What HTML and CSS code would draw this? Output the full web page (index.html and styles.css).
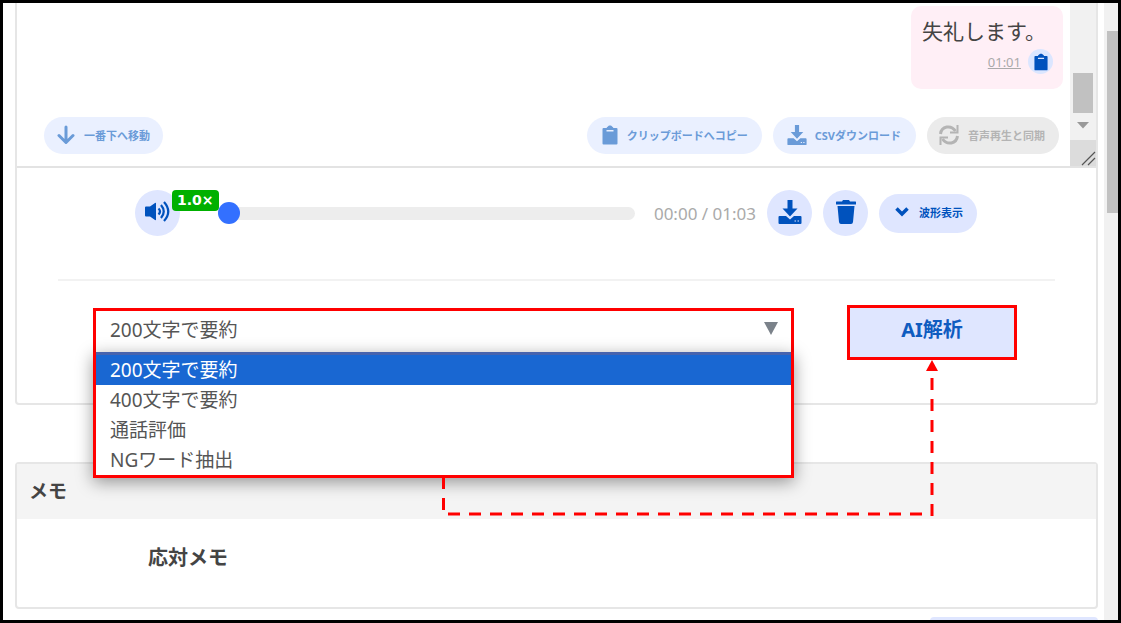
FILE: index.html
```
<!DOCTYPE html>
<html lang="ja">
<head>
  <meta charset="UTF-8">
  <meta name="viewport" content="width=device-width, initial-scale=1.0">
  <title>通話詳細</title>
  <link rel="stylesheet" href="styles.css">
</head>
<body>
  <!-- 共通アイコン -->
  <svg class="sprite" aria-hidden="true">
    <symbol id="i-clipboard" viewBox="0 0 16 20">
      <path d="M1.5 3H4.6C4.8 2 5.6 2 6 1.5C6.400 .3 9.600 .3 10 1.500C10.400 2 11.200 2 11.400 3H14.500Q15.500 3 15.500 4V18.500Q15.500 19.500 14.500 19.500H1.500Q.5 19.500 .5 18.500V4Q.5 3 1.500 3ZM4.500 5V6.500H11.500V5Z" fill="currentColor" fill-rule="evenodd"/>
    </symbol>
    <symbol id="i-download" viewBox="0 0 24 24">
      <path d="M9.500 0h5v8.500h5L12 16.500 4.500 8.500h5zM1.500 16H8l4 3.500 4-3.500h6.500q1 0 1 1v6q0 1-1 1h-21q-1 0-1-1v-6q0-1 1-1zM16.500 20.500v1H18v-1zM19.500 20.500v1H21v-1z" fill="currentColor" fill-rule="evenodd"/>
    </symbol>
  </svg>

  <div class="window">
    <main class="page">
      <section class="card call">
        <div class="transcript">
          <div class="transcript-body">
            <div class="bubble">
              <p class="bubble-text">失礼します。</p>
              <div class="bubble-foot">
                <a class="bubble-time" href="#">01:01</a>
                <button type="button" class="bubble-copy" aria-label="コピー"><svg width="14" height="18"><use href="#i-clipboard"/></svg></button>
              </div>
            </div>
            <div class="toolbar">
              <button type="button" class="pill light to-bottom">
                <svg width="18" height="20" viewBox="0 0 18 20" fill="none" stroke="currentColor" stroke-width="3" stroke-linecap="round" stroke-linejoin="round"><path d="M9 2V17M2 10.500L9 17.500L16 10.500"/></svg>
                一番下へ移動
              </button>
              <button type="button" class="pill light clip">
                <svg width="16" height="20"><use href="#i-clipboard"/></svg>
                クリップボードへコピー
              </button>
              <button type="button" class="pill light csv">
                <svg width="20" height="20"><use href="#i-download"/></svg>
                CSVダウンロード
              </button>
              <button type="button" class="pill gray" disabled>
                <svg width="20" height="20" viewBox="0 0 20 20" fill="none" stroke="currentColor" stroke-width="3"><path d="M1.500 9C2.500 1 12 -.5 16.500 6M18.500 11C17.500 19 8 20.500 3.500 14"/><path d="M18.500 0V7.500H11M1.500 20V12.500H9" stroke-width="2"/></svg>
                音声再生と同期
              </button>
            </div>
          </div>
          <div class="inner-scroll">
            <div class="inner-track">
              <div class="inner-thumb"></div>
              <svg width="12" height="7" viewBox="0 0 12 7"><path d="M0 0H12L6 6.500Z" fill="#999"/></svg>
            </div>
            <svg class="resizer" width="26" height="26" viewBox="0 0 26 26" fill="none" stroke="#555" stroke-width="1.200"><path d="M12 25L25 12M18 25L25 18"/></svg>
          </div>
        </div>

        <div class="player">
          <button type="button" class="round volume" aria-label="再生速度">
            <svg width="27" height="22" viewBox="0 0 27 22"><path d="M1 6.500Q1 5.500 2 5.500H6L11 2Q12 1.500 12 2.500V18.500Q12 19.500 11 19L6 15.500H2Q1 15.500 1 14.500Z" fill="currentColor"/><path d="M14.500 7.500Q17.500 10.500 14.500 13.500M17 4Q22.500 10.500 17 17M20 1Q28.500 10.500 20 20" fill="none" stroke="currentColor" stroke-width="2.200"/></svg>
            <span class="speed">1.0×</span>
          </button>
          <input type="range" class="seek" min="0" max="63" value="0" aria-label="再生位置">
          <span class="time">00:00 / 01:03</span>
          <button type="button" class="round" aria-label="ダウンロード"><svg width="24" height="24"><use href="#i-download"/></svg></button>
          <button type="button" class="round" aria-label="削除">
            <svg width="20" height="24" viewBox="0 0 20 24" fill="currentColor"><path d="M0 2Q0 1.500 .5 1.500H6L7 0H13L14 1.500H19.500Q20 1.500 20 2V4.500H0ZM1.500 6H18.500L17 22Q16.800 24 15 24H5Q3.200 24 3 22Z"/></svg>
          </button>
          <button type="button" class="pill wave">
            <svg width="14" height="10" viewBox="0 0 14 10" fill="none" stroke="currentColor" stroke-width="3.500"><path d="M1.500 1.500L7 7L12.500 1.500"/></svg>
            波形表示
          </button>
        </div>

        <hr class="divider">

        <div class="analysis">
          <div class="picker">
            <select class="picker-select" aria-label="解析内容">
              <option>200文字で要約</option>
              <option>400文字で要約</option>
              <option>通話評価</option>
              <option>NGワード抽出</option>
            </select>
            <svg class="caret" width="14" height="13" viewBox="0 0 14 13"><path d="M0 0H14L7 13Z" fill="#7b828a"/></svg>
            <ul class="menu" role="listbox" aria-label="解析内容">
              <li class="selected" role="option" aria-selected="true">200文字で要約</li>
              <li role="option">400文字で要約</li>
              <li role="option">通話評価</li>
              <li role="option">NGワード抽出</li>
            </ul>
          </div>
          <div class="run">
            <button type="button" class="run-btn">AI解析</button>
            <!-- 選択欄から解析ボタンへの矢印 -->
            <svg class="connector" width="496" height="157" viewBox="0 0 496 157" fill="none" stroke="#f00" stroke-width="3">
              <path d="M1.500 118V154" stroke-dasharray="11 9 12 20"/>
              <path d="M6 154H480" stroke-dasharray="12 9"/>
              <path d="M490 156V12" stroke-dasharray="12 9"/>
              <path d="M490 0L496 11H484Z" fill="#f00" stroke="none"/>
            </svg>
          </div>
        </div>
      </section>

      <section class="card memo">
        <h2 class="memo-title">メモ</h2>
        <h3 class="memo-label">応対メモ</h3>
      </section>

      <button type="button" class="save-btn" aria-label="保存"></button>
    </main>
    <div class="page-scroll"><div class="page-thumb"></div></div>
  </div>
</body>
</html>
```

FILE: styles.css
```
* {
  box-sizing: border-box;
}
body {
  margin: 0;
  color: #444;
  background: #fff;
  font-family: "Noto Sans", "Noto Sans CJK JP", sans-serif;
}
button, select {
  font-family: inherit;
}
button {
  border: none;
  cursor: pointer;
}
svg {
  flex: none;
}
.sprite {
  display: none;
}
.window {
  display: flex;
  height: 100vh;
  border: 3px solid #000;
  overflow: hidden;
}
.page {
  flex: 1;
  min-width: 0;
  padding: 0 6px 0 12px;
}
.card {
  border: 2px solid #e6e6e6;
  border-radius: 4px;
}
.call {
  border-top: none;
  border-radius: 0 0 4px 4px;
  padding-bottom: 43px;
}

/* 会話ログ */
.transcript {
  display: flex;
  border-bottom: 2px solid #e3e3e3;
}
.transcript-body {
  flex: 1;
  display: flex;
  flex-direction: column;
  padding-top: 3px;
}
.bubble {
  align-self: flex-end;
  width: 152px;
  height: 83px;
  margin-right: 7px;
  padding: 9px 10px 9px 11px;
  background: #ffeff6;
  border-radius: 10px;
}
.bubble-text {
  margin: 0;
  font-size: 21px;
  line-height: 32px;
}
.bubble-foot {
  display: flex;
  justify-content: flex-end;
  align-items: center;
  gap: 7px;
  padding-top: 2px;
}
.bubble-time {
  color: #aaa;
  font-size: 13px;
}
.bubble-copy {
  display: flex;
  align-items: center;
  justify-content: center;
  width: 25px;
  height: 25px;
  padding: 0;
  border-radius: 50%;
  color: #0052bd;
  background: #dbe6ff;
}
.toolbar {
  display: flex;
  gap: 11px;
  padding: 28px 11px 12px 27px;
}
.pill {
  display: flex;
  align-items: center;
  gap: 9px;
  height: 37px;
  padding: 0 13px 2px;
  border-radius: 20px;
  color: #0052bd;
  background: #dfe6ff;
  font-size: 11px;
  font-weight: bold;
  white-space: nowrap;
}
.light {
  color: #6a9bd8;
  background: #eaf0ff;
}
.gray {
  color: #b4b4b4;
  background: #ebebeb;
  padding: 0 14px 2px 12px;
}
.clip {
  padding: 0 14px 2px 15px;
}
.csv {
  gap: 8px;
  padding: 0 15px 2px 14px;
}
.to-bottom {
  margin-right: auto;
}
.inner-scroll {
  display: flex;
  flex-direction: column;
  width: 26px;
  background: #f1f1f1;
}
.inner-track {
  flex: 1;
  display: flex;
  flex-direction: column;
  align-items: center;
  justify-content: flex-end;
  gap: 9px;
  padding-bottom: 11px;
}
.inner-thumb {
  width: 20px;
  height: 40px;
  background: #c1c1c1;
}
.resizer {
  display: block;
  background: #dcdcdc;
}

/* プレーヤー */
.player {
  display: flex;
  align-items: center;
  gap: 11px;
  padding: 22px 119px 0 118px;
}
.round {
  position: relative;
  flex: none;
  display: flex;
  align-items: center;
  justify-content: center;
  width: 45px;
  height: 46px;
  padding: 0 0 3px;
  border-radius: 50%;
  color: #0052bd;
  background: #dfe6ff;
}
.volume {
  margin-right: 27px;
}
.speed {
  position: absolute;
  top: 0;
  left: 37px;
  padding: 0 5px;
  border-radius: 4px;
  color: #fff;
  background: #00b000;
  font-family: "DejaVu Sans", sans-serif;
  font-size: 14px;
  font-weight: bold;
  line-height: 21px;
}
.seek {
  flex: 1;
  min-width: 0;
  height: 22px;
  margin: 0 8px 0 0;
  appearance: none;
  background: none;
}
.seek::-webkit-slider-runnable-track {
  height: 13px;
  border-radius: 7px;
  background: #ededed;
}
.seek::-webkit-slider-thumb {
  appearance: none;
  width: 22px;
  height: 22px;
  margin-top: -5px;
  border-radius: 50%;
  background: #3370ff;
}
.time {
  color: #aaa;
  font-size: 17px;
  white-space: nowrap;
}
.wave {
  height: 39px;
  gap: 10px;
  padding: 0 14px 2px 16px;
}

.divider {
  height: 2px;
  margin: 43px 41px 24px;
  border: none;
  background: #f2f2f2;
}

/* AI解析 */
.analysis {
  display: flex;
  align-items: flex-start;
  gap: 53px;
  padding: 0 79px 0 76px;
}
.picker {
  position: relative;
  flex: 1;
  height: 44px;
  margin-top: 3px;
  border: 3px solid #f00;
  border-bottom: none;
}
.picker-select {
  display: block;
  width: 100%;
  height: 41px;
  padding: 0 14px 4px;
  border: none;
  border-radius: 0;
  color: #555;
  background: #fff;
  font-size: 19px;
  appearance: none;
}
.caret {
  position: absolute;
  top: 11px;
  right: 13px;
}
.menu {
  position: absolute;
  top: 100%;
  left: -3px;
  right: -3px;
  margin: 0;
  padding: 0;
  list-style: none;
  border: 3px solid #f00;
  border-top: none;
  background: #fff;
  box-shadow: 0 4px 16px rgba(0, 0, 0, 0.4);
}
.menu li {
  padding: 0 14px;
  color: #555;
  font-size: 19px;
  line-height: 30px;
}
.menu .selected {
  border-top: 3px solid #4663ae;
  color: #fff;
  background: #1967d2;
}
.run {
  position: relative;
  width: 170px;
}
.run-btn {
  display: block;
  width: 100%;
  height: 55px;
  padding: 0 0 8px;
  border: 3px solid #f00;
  color: #0f5cc0;
  background: #dfe6ff;
  font-size: 20px;
  font-weight: bold;
}
.connector {
  position: absolute;
  top: 55px;
  right: 79px;
  pointer-events: none;
}

/* メモ */
.memo {
  margin-top: 57px;
  height: 147px;
}
.memo-title {
  margin: 0;
  padding: 0 12px;
  background: #f4f4f4;
  font-size: 19px;
  line-height: 55px;
}
.memo-label {
  margin: 24px 131px;
  font-size: 20px;
  line-height: 30px;
}
.save-btn {
  display: block;
  width: 168px;
  height: 44px;
  margin: 8px 0 0 auto;
  border-radius: 4px;
  background: #dfe6ff;
}

.page-scroll {
  width: 14px;
  padding: 28px 0 0 3px;
  background: #f1f1f1;
}
.page-thumb {
  height: 182px;
  background: #c1c1c1;
}
```
